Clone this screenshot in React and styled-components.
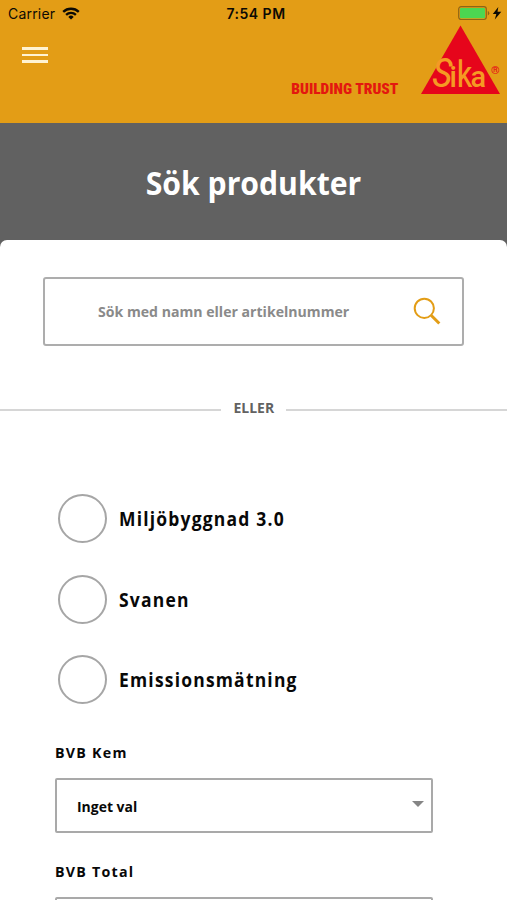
import React, { useState } from "react";
import styled, { createGlobalStyle } from "styled-components";

const OPTIONS = ["Miljöbyggnad 3.0", "Svanen", "Emissionsmätning"];
const SELECTS = ["BVB Kem", "BVB Total"];

const StatusBar = () => (
  <Status>
    <Carrier>
      Carrier
      <svg width="18" height="13" viewBox="0 0 18 13" fill="none" stroke="#0c0a04" strokeWidth="2.3">
        <path d="M1.2 4.9a11.2 11.2 0 0 1 15.6 0" />
        <path d="M4.1 7.9a7 7 0 0 1 9.8 0" />
        <path d="M9 12.6L6.3 9.9a3.9 3.9 0 0 1 5.4 0z" fill="#0c0a04" stroke="none" />
      </svg>
    </Carrier>
    <Clock>7:54 PM</Clock>
    <Battery>
      <svg width="44" height="15" viewBox="0 0 44 15">
        <rect x="0.7" y="0.7" width="27.6" height="12.8" rx="2.4" fill="none" stroke="#8d6516" strokeWidth="1.2" />
        <rect x="2" y="2" width="25" height="10.2" rx="1" fill="#4cd651" />
        <path d="M29.8 5v4.4q1.5-.6 1.5-2.2T29.8 5z" fill="#8d6516" />
        <path d="M40.3 1L34.8 8h3.5l-1.5 5.6 6.5-7.8h-3.8z" fill="#0c0a04" />
      </svg>
    </Battery>
  </Status>
);

const Logo = () => (
  <LogoSvg width="82" height="70" viewBox="0 0 82 70">
    <path d="M40.5 0.5L80 69H1z" fill="#e6051b" />
    <text className="name" y="61.5">
      <tspan className="big" x="12">S</tspan>
      <tspan x="29.5">i</tspan>
      <tspan className="tall" x="36.5">k</tspan>
      <tspan x="50.5">a</tspan>
    </text>
    <text className="mark" x="71" y="48.5">®</text>
  </LogoSvg>
);

const App = () => {
  const [checked, setChecked] = useState([]);

  const toggle = (name) => {
    setChecked(checked.includes(name) ? checked.filter((v) => v !== name) : [...checked, name]);
  };

  return (
    <Screen>
      <GlobalStyle />
      <Header>
        <StatusBar />
        <Nav>
          <Burger aria-label="Meny">
            <i />
            <i />
            <i />
          </Burger>
          <Slogan>BUILDING TRUST</Slogan>
          <Logo />
        </Nav>
      </Header>
      <Hero>
        <Title>Sök produkter</Title>
      </Hero>
      <Sheet>
        <SearchBox>
          <SearchText $scale={0.94}>Sök med namn eller artikelnummer</SearchText>
          <svg width="28" height="28" viewBox="0 0 28 28" fill="none" stroke="#e39d16">
            <circle cx="11.3" cy="11.3" r="9.6" strokeWidth="2" />
            <path d="M18.3 18.5l8 8" strokeWidth="3" />
          </svg>
        </SearchBox>
        <Divider>
          <DividerText $scale={0.93}>ELLER</DividerText>
        </Divider>
        <Options>
          {OPTIONS.map((name) => (
            <Option key={name} onClick={() => toggle(name)}>
              <Circle $on={checked.includes(name)} />
              <OptionText $scale={0.92}>{name}</OptionText>
            </Option>
          ))}
        </Options>
        {SELECTS.map((name) => (
          <Field key={name}>
            <FieldLabel $scale={0.95}>{name}</FieldLabel>
            <SelectBox>
              <SelectText $scale={0.93}>Inget val</SelectText>
              <Arrow />
            </SelectBox>
          </Field>
        ))}
      </Sheet>
    </Screen>
  );
};

const GlobalStyle = createGlobalStyle`
  * {
    box-sizing: border-box;
  }

  body {
    margin: 0;
    overflow: hidden;
    font-family: "Open Sans", "Noto Sans", sans-serif;
    font-weight: 700;
  }
`;

const Screen = styled.div`
  width: 507px;
  height: 900px;
  overflow: hidden;
  background: #fff;
`;

const Header = styled.header`
  height: 123px;
  background: #e39d16;
`;

const Status = styled.div`
  display: grid;
  grid-template-columns: 1fr auto 1fr;
  align-items: center;
  height: 27px;
  padding: 0 4px 0 8px;
  font-family: Inter, sans-serif;
  font-size: 14px;
  color: #0c0a04;
`;

const Carrier = styled.div`
  display: flex;
  align-items: center;
  gap: 7px;
  font-weight: 400;
  letter-spacing: 0.2px;
`;

const Clock = styled.div`
  padding-left: 1px;
  font-weight: 600;
  letter-spacing: 0.5px;
`;

const Battery = styled.div`
  display: flex;
  justify-content: flex-end;

  svg {
    margin-right: 1px;
  }
`;

const Nav = styled.div`
  display: flex;
  align-items: flex-start;
  padding: 0 5px 0 22px;
`;

const LogoSvg = styled.svg`
  margin-top: -2px;
  font-family: Roboto, sans-serif;

  .name {
    font-size: 29px;
    font-weight: 500;
    fill: #f59a23;
  }

  .big {
    font-size: 41px;
    font-weight: 400;
    font-style: italic;
    font-stretch: 75%;
  }

  .tall {
    font-size: 36px;
    font-weight: 400;
    font-stretch: 75%;
  }

  .mark {
    font-size: 11px;
    fill: #e6051b;
  }
`;

const Burger = styled.button`
  display: flex;
  flex-direction: column;
  gap: 4px;
  width: 26px;
  margin: 20px 0 0;
  padding: 0;
  border: 0;
  background: none;

  i {
    height: 2.5px;
    background: #fff3d2;
  }
`;

const Slogan = styled.div`
  margin: 54px 22px 0 auto;
  font-family: Roboto, sans-serif;
  font-size: 14px;
  font-weight: 900;
  font-stretch: 87%;
  line-height: 16px;
  color: #e3180f;
  transform: scaleX(1.1);
  transform-origin: right;
`;

const Hero = styled.div`
  height: 117px;
  padding-top: 35px;
  background: #616161;
  text-align: center;
`;

// narrows the face a little, keeping the left edge in place
const Narrow = styled.span`
  white-space: nowrap;
  transform: scaleX(${(props) => props.$scale});
  transform-origin: left;
`;

const Title = styled.h1`
  margin: 0;
  font-size: 33px;
  font-weight: 700;
  line-height: 50px;
  color: #fff;
  transform: scaleX(0.914);
`;

const Sheet = styled.main`
  height: 660px;
  padding-top: 37px;
  border-radius: 7px 7px 0 0;
  background: #fff;
  box-shadow: 0 -8px 0 8px #616161;
  clip-path: inset(-1px 0 0 0);
`;

const SearchBox = styled.div`
  display: flex;
  align-items: center;
  justify-content: space-between;
  width: 421px;
  height: 69px;
  margin-left: 43px;
  padding: 0 21px 2px 53px;
  border: 2px solid #adadad;
  border-radius: 3px;
`;

const SearchText = styled(Narrow)`
  font-size: 15px;
  color: #8a8a8a;
`;

const Divider = styled.div`
  display: flex;
  align-items: center;
  gap: 11px;
  height: 24px;
  margin-top: 50px;
  font-size: 15px;
  color: #626262;

  &::before,
  &::after {
    content: "";
    flex: 1;
    height: 2px;
    margin-top: 3px;
    background: #d6d6d6;
  }
`;

const DividerText = styled(Narrow)`
  margin-top: -2px;
  transform-origin: center;
`;

const Options = styled.div`
  display: flex;
  flex-direction: column;
  gap: 31.7px;
  margin: 74px 0 37px 57.5px;
`;

const Option = styled.div`
  display: flex;
  align-items: center;
  gap: 12px;
  height: 49px;
  cursor: pointer;
`;

const Circle = styled.span`
  width: 49px;
  height: 49px;
  border: 2px solid #a6a6a6;
  border-radius: 50%;
  background: ${(props) => (props.$on ? "#e39d16" : "#fff")};
`;

const OptionText = styled(Narrow)`
  padding-top: 1px;
  font-size: 19px;
  letter-spacing: 1.3px;
  color: #080808;
`;

const Field = styled.div`
  width: 378px;
  margin: 0 0 27px 55px;
`;

const FieldLabel = styled(Narrow)`
  display: block;
  height: 22px;
  margin-bottom: 15px;
  font-size: 15px;
  line-height: 22px;
  letter-spacing: 1.3px;
  color: #080808;
`;

const SelectBox = styled.div`
  display: flex;
  align-items: center;
  justify-content: space-between;
  height: 55px;
  padding: 0 7px 0 20px;
  border: 2px solid #a9a9a9;
  border-radius: 2px;
  color: #080808;
`;

const SelectText = styled(Narrow)`
  font-size: 15px;
`;

const Arrow = styled.span`
  margin-top: -3px;
  border: 6px solid transparent;
  border-top-color: #858585;
  border-bottom: 0;
`;

export default App;
